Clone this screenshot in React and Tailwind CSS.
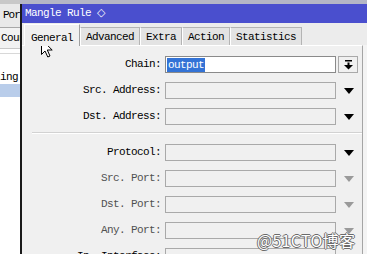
import React from "react";

const F = "font-['Liberation_Mono',monospace] text-[11px] tracking-[-0.6px]";

function Tri({ gray }) {
  return (
    <svg width="10" height="6" viewBox="0 0 10 6">
      <path d="M0 0H10L5 6Z" fill={gray ? "#9a9a9a" : "#000"} />
    </svg>
  );
}

function Row({ label, gray, chain, mt }) {
  return (
    <div className={`flex items-center h-[17px] shrink-0 ${mt || ""}`}>
      <div className={`w-[141px] text-right pr-[2px] ${gray ? "text-[#505050]" : "text-black"}`}>{label}</div>
      <div className={`ml-[2px] w-[171px] h-[17px] border ${chain ? "bg-white border-[#8a8a8a]" : "bg-[#f0f0f0] border-[#a9a9a9]"} flex items-center`}>
        {chain && (
          <span className="ml-[1px] h-[14px] px-[1px] bg-[#3373d6] text-white leading-[14px]">output</span>
        )}
      </div>
      {chain ? (
        <div className="ml-[2px] w-[20px] h-[17px] border border-[#a9a9a9] bg-[#f0f0f0] flex items-center justify-center">
          <svg width="9" height="10" viewBox="0 0 9 10">
            <rect x="1" y="0" width="7" height="1.5" fill="#000" />
            <rect x="3.5" y="2.5" width="2" height="3" fill="#000" />
            <path d="M0 5H9L4.5 9.5Z" fill="#000" />
          </svg>
        </div>
      ) : (
        <div className="ml-[8px] w-[10px] flex items-center">
          <Tri gray={gray} />
        </div>
      )}
    </div>
  );
}

function Tab({ children, active }) {
  return active ? (
    <div className="h-[22px] px-[6px] bg-[#f0f0f0] border-t border-l border-white border-r border-r-[#a0a0a0] flex items-start pt-[5px] relative z-10 -mb-[1px]">
      {children}
    </div>
  ) : (
    <div className="h-[18px] px-[5px] bg-[#e3e3e3] border-t border-r border-[#b4b4b4] border-l border-l-white flex items-center pt-[1px]">
      {children}
    </div>
  );
}

export default function App() {
  return (
    <div className={`w-[367px] h-[254px] overflow-hidden relative bg-[#ececec] flex flex-col ${F}`}>
      <div className="h-[4px] flex shrink-0">
        <div className="w-[20px] bg-[#c8c8c8]" />
        <div className="flex-1 bg-[#b4b6c6]" />
      </div>
      <div className="flex flex-1 min-h-0">
        {/* background window strip */}
        <div className="w-[20px] shrink-0 overflow-hidden bg-white flex flex-col whitespace-nowrap">
          <div className="h-[24px] bg-[#e9e9e9] border-b border-[#a8a8a8] flex items-center pl-[3px] shrink-0 tracking-[-1px]">Port</div>
          <div className="h-[21px] bg-[#f2f2f2] border-b border-[#c8c8c8] flex items-center pl-[1px] shrink-0">Count</div>
          <div className="h-[5px] border-b border-[#d8d8d8] shrink-0" />
          <div className="h-[16px] shrink-0" />
          <div className="h-[14px] flex items-center shrink-0 -ml-[24px]">Routing</div>
          <div className="h-[13px] bg-[#b9cdea] shrink-0" />
        </div>
        {/* dialog */}
        <div className="flex-1 flex flex-col border-l-2 border-[#1a1a1a] min-w-0">
          <div className="h-[19px] bg-[#4a4fce] text-white flex items-center pl-[3px] shrink-0 whitespace-nowrap">
            Mangle Rule <span className="ml-[6px] font-['DejaVu_Sans',sans-serif] text-[11px]">◇</span>
          </div>
          <div className="h-[22px] flex items-end pl-[2px] shrink-0 whitespace-nowrap">
            <Tab active>General</Tab>
            <Tab>Advanced</Tab>
            <Tab>Extra</Tab>
            <Tab>Action</Tab>
            <Tab>Statistics</Tab>
          </div>
          <div className="flex flex-1 min-h-0">
            <div className="w-[341px] shrink-0 bg-[#f0f0f0] border-t border-white border-r border-r-[#a5a5a5] flex flex-col pt-[10px] overflow-hidden whitespace-nowrap">
              <Row label="Chain:" chain />
              <Row label="Src. Address:" mt="mt-[9px]" />
              <Row label="Dst. Address:" mt="mt-[9px]" />
              <div className="mt-[7px] ml-[10px] h-[2px] border-t border-[#d2d2d2] border-b border-b-white shrink-0" />
              <Row label="Protocol:" mt="mt-[10px]" />
              <Row label="Src. Port:" gray mt="mt-[9px]" />
              <Row label="Dst. Port:" gray mt="mt-[9px]" />
              <Row label="Any. Port:" gray mt="mt-[9px]" />
              <Row label="In. Interface:" mt="mt-[9px]" />
            </div>
            <div className="flex-1 bg-[#f4f4f4]" />
          </div>
        </div>
      </div>
      {/* mouse cursor */}
      <svg className="absolute left-[41px] top-[39px]" width="13" height="19" viewBox="0 0 13 19">
        <path d="M0.5 0.5L0.5 15.5L4 12L6.8 18L9 17L6.3 11H11.2Z" fill="#fff" stroke="#000" strokeWidth="1" strokeLinejoin="miter" />
      </svg>
      {/* watermark */}
      <div className="absolute left-[257px] top-[228px] text-[16px] tracking-[0.3px] text-white font-['Noto_Sans_CJK_SC',sans-serif] [text-shadow:1px_0_0_#6a6a6a,-1px_0_0_#6a6a6a,0_1px_0_#6a6a6a,0_-1px_0_#6a6a6a]">
        @51CTO博客
      </div>
    </div>
  );
}
